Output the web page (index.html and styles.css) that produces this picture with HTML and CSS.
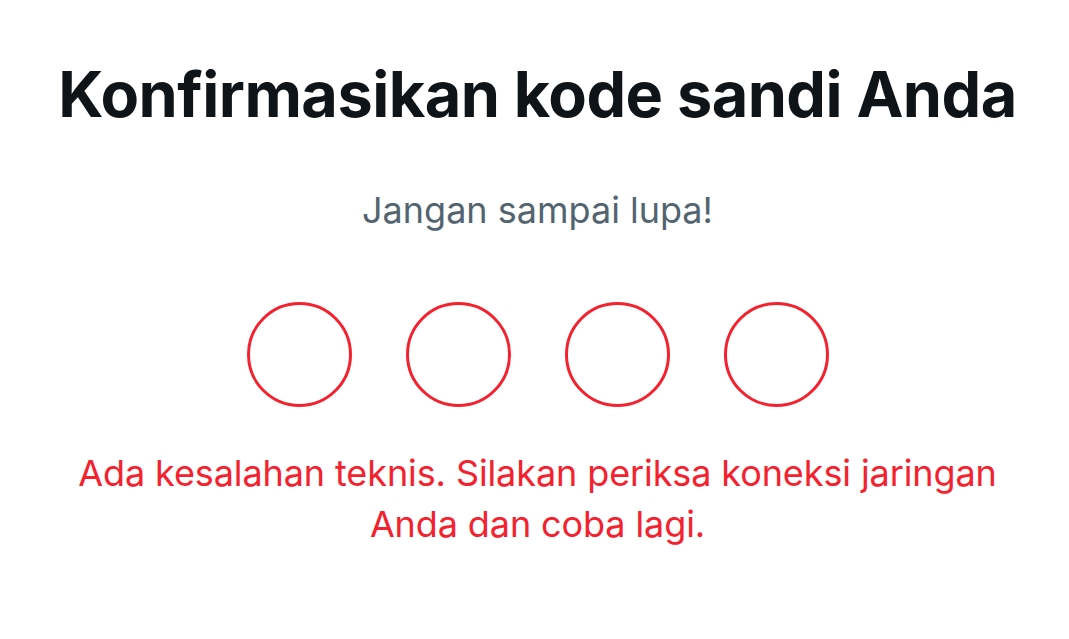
FILE: index.html
```
<!DOCTYPE html>
<html lang="id">
<head>
	<meta charset="UTF-8">
	<title>Konfirmasikan kode sandi</title>
	<link rel="stylesheet" href="styles.css">
</head>
<body>
	<div class="page">
		<h1 class="title">Konfirmasikan kode sandi Anda</h1>
		<p class="subtitle">Jangan sampai lupa!</p>
		<div class="pins">
			<span class="pin"></span>
			<span class="pin"></span>
			<span class="pin"></span>
			<span class="pin"></span>
		</div>
		<p class="error">Ada kesalahan teknis. Silakan periksa koneksi jaringan<br>Anda dan coba lagi.</p>
	</div>
</body>
</html>
```

FILE: styles.css
```
html,body{
	margin: 0;padding: 0;background: #fff;
}
.page{
	display: flex;flex-direction: column;align-items: center;
	padding: 56px 0 0 6px;
	font-family: Inter, "Noto Sans", sans-serif;
	text-align: center;
}
.title{
	margin: 0;
	font-size: 63px;line-height: 76px;font-weight: 700;color: #0f1419;
	letter-spacing: -0.55px;
}
.subtitle{
	margin: 56px 0 0;
	font-size: 36px;line-height: 44px;color: #536471;
}
.pins{
	display: flex;gap: 54px;
	margin-top: 70px;
}
.pin{
	width: 99px;height: 99px;
	border: 3px solid #f4212e;border-radius: 50%;
}
.error{
	margin: 41px 0 0;
	font-size: 36px;line-height: 51px;color: #f4212e;
	letter-spacing: -0.1px;
}
```
